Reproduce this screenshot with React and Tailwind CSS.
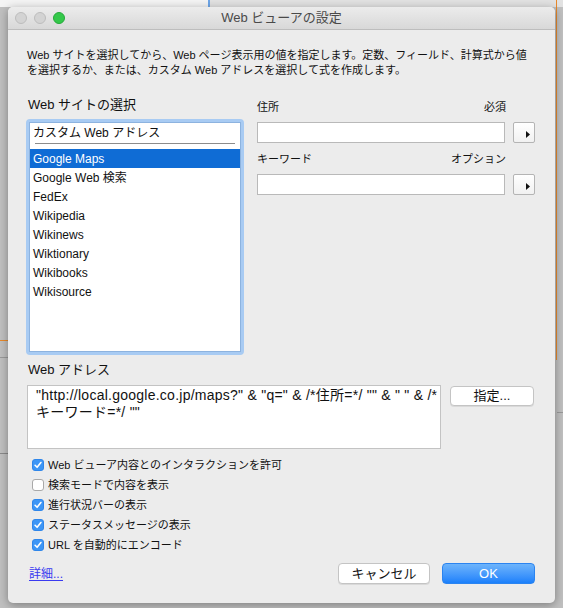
import React from "react";

function Check({ checked }) {
  return checked ? (
    <span className="flex h-[12px] w-[12px] shrink-0 items-center justify-center rounded-[3px] border border-[#2f86ea] bg-[#3d96f6]">
      <svg width="8" height="8" viewBox="0 0 8 8">
        <path d="M1.1 4.3 L3.1 6.3 L6.9 1.5" fill="none" stroke="white" strokeWidth="1.6" strokeLinecap="round" strokeLinejoin="round" />
      </svg>
    </span>
  ) : (
    <span className="h-[12px] w-[12px] shrink-0 rounded-[3px] border border-[#a9a9a9] bg-white" />
  );
}

function ArrowButton() {
  return (
    <div className="flex h-[21px] w-[22px] items-end justify-end rounded-[2px] border border-[#b4b4b4] bg-gradient-to-b from-[#ffffff] to-[#f1f1f1] pb-[4px] pr-[4px]">
      <svg width="4" height="7" viewBox="0 0 4 7">
        <path d="M0 0 L4 3.5 L0 7 Z" fill="#111" />
      </svg>
    </div>
  );
}

const sites = ["Google Web 検索", "FedEx", "Wikipedia", "Wikinews", "Wiktionary", "Wikibooks", "Wikisource"];

const options = [
  [true, "Web ビューア内容とのインタラクションを許可"],
  [false, "検索モードで内容を表示"],
  [true, "進行状況バーの表示"],
  [true, "ステータスメッセージの表示"],
  [true, "URL を自動的にエンコード"],
];

export default function App() {
  return (
    <div className="relative h-[608px] w-[563px] overflow-hidden bg-[#c0c0c0] pl-[8px] pt-[7px] text-[#111] [font-family:'Liberation_Sans','Noto_Sans_CJK_JP',sans-serif]">
      {/* background desktop details */}
      <div className="absolute left-0 top-0 h-[7px] w-[208px] bg-[#f4f4f4]" />
      <div className="absolute left-[208px] top-0 h-[7px] w-[2px] bg-[#6ea6e8]" />
      <div className="absolute left-[210px] top-0 h-[7px] w-[353px] bg-[#e2e2e2]" />
      <div className="absolute left-[556px] top-0 h-[360px] w-[1px] bg-[#e8892b]" />
      <div className="absolute left-[557px] top-[412px] h-[1px] w-[6px] bg-[#9a9a9a]" />
      <div className="absolute left-0 top-[340px] h-[1px] w-[8px] bg-[#e8892b]" />
      <div className="absolute left-0 top-[357px] h-[1px] w-[8px] bg-[#9a9a9a]" />
      <div className="absolute left-0 top-[453px] h-[1px] w-[8px] bg-[#8a8a8a]" />

      <div className="relative flex h-[596px] w-[547px] flex-col rounded-[5px] bg-[#ececec] shadow-[0_2px_10px_rgba(0,0,0,0.35)]">
        {/* title bar */}
        <div className="grid h-[23px] grid-cols-[1fr_auto_1fr] items-center rounded-t-[5px] border-b border-[#bdbdbd] bg-gradient-to-b from-[#ececec] to-[#d8d8d8]">
          <div className="flex items-center gap-[7px] pl-[7px]">
            <span className="h-[12px] w-[12px] rounded-full border border-[#bdbdbd] bg-[#d3d3d3]" />
            <span className="h-[12px] w-[12px] rounded-full border border-[#bdbdbd] bg-[#d3d3d3]" />
            <span className="h-[12px] w-[12px] rounded-full border border-[#25a93a] bg-[#34c84a]" />
          </div>
          <div className="text-[13px] leading-[16px] text-[#4a4a4a]">Web ビューアの設定</div>
          <div />
        </div>

        {/* body */}
        <div className="flex flex-col pl-[19px] pr-[20px] pt-[18px]">
          <div className="text-[11px] leading-[15px]">
            <div className="whitespace-nowrap">Web サイトを選択してから、Web ページ表示用の値を指定します。定数、フィールド、計算式から値</div>
            <div className="whitespace-nowrap">を選択するか、または、カスタム Web アドレスを選択して式を作成します。</div>
          </div>

          <div className="mt-[19px] flex">
            {/* left column */}
            <div className="ml-[-1px] flex w-[218px] flex-col">
              <div className="pl-[2px] text-[13px] leading-[16px]">Web サイトの選択</div>
              <div className="mt-[6px] h-[236px] rounded-[4px] bg-[#a8cbf3] p-[3px]">
                <div className="flex h-full flex-col border border-[#8db3df] bg-white text-[12px]">
                  <div className="flex h-[19px] items-center pl-[3px]">カスタム Web アドレス</div>
                  <div className="mx-[5px] mt-[1px] h-[1px] bg-[#8c8c8c]" />
                  <div className="mt-[5px] flex h-[19px] items-center bg-[#0f6cd5] pl-[3px] text-white">Google Maps</div>
                  {sites.map((s) => (
                    <div key={s} className="flex h-[19px] items-center pl-[3px]">
                      {s}
                    </div>
                  ))}
                </div>
              </div>
            </div>

            {/* right column */}
            <div className="ml-[13px] flex flex-col pt-[3px] text-[11px] leading-[14px]">
              <div className="flex w-[249px] justify-between">
                <span>住所</span>
                <span>必須</span>
              </div>
              <div className="mt-[8px] flex gap-[8px]">
                <div className="h-[21px] w-[248px] border border-[#b9b9b9] bg-white" />
                <ArrowButton />
              </div>
              <div className="mt-[9px] flex w-[249px] justify-between">
                <span>キーワード</span>
                <span>オプション</span>
              </div>
              <div className="mt-[8px] flex gap-[8px]">
                <div className="h-[21px] w-[248px] border border-[#b9b9b9] bg-white" />
                <ArrowButton />
              </div>
            </div>
          </div>

          <div className="mt-[7px] pl-[1px] text-[13px] leading-[16px]">Web アドレス</div>
          <div className="mt-[7px] flex items-start">
            <div className="h-[64px] w-[414px] border border-[#c3c3c3] bg-white px-[8px] pt-[1px] text-[14px] leading-[17px] tracking-[0.25px]">
              <div className="whitespace-nowrap">"http://local.google.co.jp/maps?" &amp; "q=" &amp; /*住所=*/ "" &amp; " " &amp; /*</div>
              <div className="whitespace-nowrap">キーワード=*/ ""</div>
            </div>
            <div className="ml-[9px] mt-[1px] flex h-[20px] w-[84px] items-center justify-center rounded-[4px] border border-[#c4c4c4] bg-white text-[13px] shadow-[0_1px_0_rgba(0,0,0,0.08)]">
              指定...
            </div>
          </div>

          <div className="mt-[6px] flex flex-col text-[11px]">
            {options.map(([c, t]) => (
              <div key={t} className="flex h-[20px] items-center gap-[4px] pl-[5px]">
                <Check checked={c} />
                <span>{t}</span>
              </div>
            ))}
          </div>

          <div className="mt-[8px] flex items-center justify-between">
            <span className="pl-[2px] text-[12px] leading-[14px] text-[#3a3af0] underline underline-offset-2">詳細...</span>
            <div className="flex gap-[12px]">
              <div className="flex h-[21px] w-[92px] items-center justify-center rounded-[4px] border border-[#c4c4c4] bg-white text-[13px] shadow-[0_1px_0_rgba(0,0,0,0.08)]">
                キャンセル
              </div>
              <div className="flex h-[21px] w-[93px] items-center justify-center rounded-[4px] border border-[#2b84f0] bg-gradient-to-b from-[#6db4fb] to-[#1a80fb] text-[13px] text-white">
                OK
              </div>
            </div>
          </div>
        </div>
      </div>
    </div>
  );
}
